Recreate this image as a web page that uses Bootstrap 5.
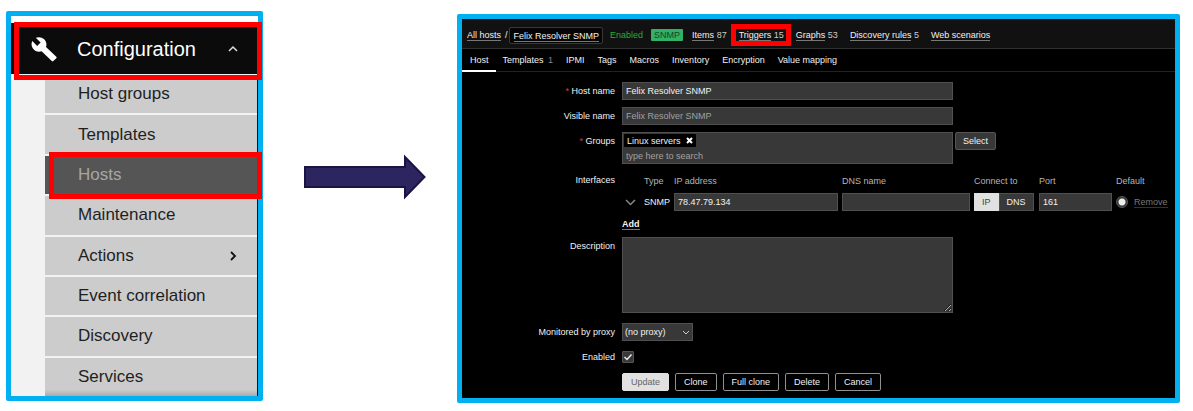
<!DOCTYPE html>
<html lang="en">
<head>
<meta charset="utf-8">
<meta name="viewport" content="width=device-width, initial-scale=1">
<title>Host configuration</title>
<link href="https://cdn.jsdelivr.net/npm/bootstrap@5.3.0/dist/css/bootstrap.min.css" rel="stylesheet">
<style>
  body { font-family: "Liberation Sans", Arial, sans-serif; background: #fff; }
  .guide { padding: 11px 13px 8px 6px; }
  .frame { border: 5px solid #00b0f0; border-radius: 2px; }
  .marker { position: absolute; border: 5px solid #f00; pointer-events: none; }

  /* side menu */
  .side-menu { flex: 0 0 257px; margin-bottom: 2px; padding-top: 7px; background: #f2f2f2 linear-gradient(#fff, #fff) top / 100% 7px no-repeat; }
  .menu-head { height: 51px; padding: 0 20px; color: #fff; background: #0b0b0b; border: 0; text-align: left; font-size: 20px; z-index: 2; }
  .menu-head .wrench { width: 26px; height: 26px; margin-right: 20px; }
  .menu-head .marker { inset: -1px -4px -6px 3px; }
  .menu-list { display: grid; grid-auto-rows: 1fr; row-gap: 2px; margin: 1px 0 0 34px; border-right: 1px solid #111; }
  .menu-list li { position: relative; display: flex; }
  .menu-list a { padding: 0 20px 0 33px; color: #1f1f1f; background: #ccc; font-size: 17px; line-height: 20px; text-decoration: none; }
  .menu-list .current { z-index: 1; }
  .menu-list .current a { color: #a6a6a6; background: #555; }
  .menu-list .current .marker { inset: -4px -5px -5px 4px; }
  .menu-list li:last-child a { background: linear-gradient(#ccc 84%, #aaa); }

  .arrow-cell { flex: 0 0 194px; padding-left: 41px; padding-top: 143px; }

  /* host form */
  .host-panel { margin-top: 3px; background: #000; color: #f2f2f2; font-size: 9px; line-height: 12px; min-width: 0; }
  .host-panel a { color: #f2f2f2; text-decoration: none; }
  .top-bar { height: 30px; padding: 3px 5px 0; background: #111; border-bottom: 1px solid #303030; }
  .host-panel .lined { border-bottom: 1px solid #777; line-height: 10px; display: inline-block; }
  .top-bar .slash { margin: 0 1px 0 4px; }
  .top-bar .crumb { border: 1px solid #383838; background: #050505; padding: 2px 3px 1px 4px; border-radius: 2px; }
  .host-panel .state { color: #1fb335; margin-left: 7px; }
  .snmp-tag { background: #34af67; color: #0d4a24; padding: 0 3px; margin: 0 9px 0 8px; border-radius: 1px; }
  .top-links { gap: 12px; color: #ccc; }
  .top-links .marker { inset: -5px -7px -5px -8px; }
  .tab-row { height: 23px; border-bottom: 1px solid #222; gap: 1px; }
  .tab-row a { display: block; height: 23px; line-height: 23px; padding: 0 6px; }
  .tab-row a.on { border-bottom: 2px solid #fff; padding: 0 7px 0 8px; }
  .tab-row small { color: #8a8a8a; font-size: 9px; margin-left: 2px; }

  .host-form { padding: 10px 5px 7px 0; display: grid; row-gap: 7px; }
  .line { display: grid; grid-template-columns: 153px minmax(0, 1fr); column-gap: 7px; }
  .line > :first-child { text-align: right; line-height: 18px; }
  .req { color: #e33; }
  .wide { width: 331px; }
  .fld { height: 18px; padding: 0 3px; background: #383838; border: 1px solid #505050; border-radius: 0; color: #f2f2f2; font-size: 9px; line-height: 12px; }
  .fld::placeholder, .picker input::placeholder { color: #a0a0a0; opacity: 1; }
  .fld:focus { background: #383838; color: #fff; }
  .picker { height: 32px; padding: 1px; margin-right: 2px; }
  .picker input { display: block; width: 100%; border: 0; background: none; font-size: 9px; line-height: 12px; padding: 3px 2px 2px; color: #f2f2f2; }
  .chip { background: #000; height: 13px; padding: 0 3px; width: max-content; display: flex; align-items: center; gap: 5px; border-radius: 1px; }
  .chip button { border: 0; background: none; padding: 0; display: flex; }
  .act { height: 18px; padding: 0 8px; font-size: 9px; line-height: 14px; border: 1px solid #909090; border-radius: 2px; color: #f2f2f2; background: #000; }
  .act.soft { background: #383838; border-color: #555; padding: 0 7px; }
  .act.main { background: #e1e1e1; border-color: #e1e1e1; color: #666; }
  .act-row { gap: 6px; }
  .add-row { margin-top: 8px; }
  .if-table { width: 548px; table-layout: fixed; border-collapse: collapse; }
  .c-exp { width: 22px; } .c-type { width: 30px; } .c-ip { width: 168px; } .c-dns { width: 132px; }
  .c-via { width: 65px; } .c-port { width: 77px; } .c-def { width: 54px; }
  .if-table th { height: 22px; padding: 0 0 3px; font-weight: 400; color: #b5b5b5; }
  .if-table td { padding: 0; height: 18px; vertical-align: middle; }
  .if-table button.bare { border: 0; background: none; padding: 0 0 0 3px; display: flex; }
  .switch-pair label { height: 18px; line-height: 16px; padding: 0 7px; background: #383838; border: 1px solid #505050; }
  .switch-pair input:checked + label { background: #e1e1e1; border-color: #e1e1e1; color: #444; }
  .dot { appearance: none; width: 12px; height: 12px; margin: 0; border-radius: 50%; border: 1px solid #555; background: radial-gradient(circle, #eee 3px, #383838 4px); }
  .tick { appearance: none; width: 12px; height: 12px; margin: 3px 0; border: 1px solid #555; border-radius: 1px; background: #383838 url("data:image/svg+xml,%3Csvg xmlns='http://www.w3.org/2000/svg' viewBox='0 0 10 10'%3E%3Cpath d='M1.5 5l2.5 2.5 4.500-5' fill='none' stroke='%23eee' stroke-width='1.400'/%3E%3C/svg%3E"); }
  .host-panel .off { color: #777; border-color: #333; margin-left: 6px; }
  .host-panel .proxy { appearance: none; width: 71px; padding: 0 2px; background: #383838 url("data:image/svg+xml,%3Csvg xmlns='http://www.w3.org/2000/svg' viewBox='0 0 8 5'%3E%3Cpath d='M1 1l3 3 3-3' fill='none' stroke='%23ccc'/%3E%3C/svg%3E") right 2px center / 8px 5px no-repeat; }
  .notes { height: 76px; margin-bottom: 3px; resize: both; }
</style>
</head>
<body>
<main class="guide d-flex align-items-stretch">
  <nav class="side-menu frame d-flex flex-column" aria-label="Configuration">
    <button type="button" class="menu-head position-relative d-flex align-items-center w-100">
      <svg class="wrench" viewBox="0 0 26 26" aria-hidden="true"><path fill="#fff" d="M25.300 20.800 15 11.100C16 8.500 15.400 5.500 13.200 3.300 10.900 1.100 7.500.600 4.800 1.800l4.800 4.800-3.400 3.300-4.900-4.800C-.1 7.900.5 11.300 2.800 13.500c2.200 2.200 5.200 2.700 7.800 1.700l10.200 9.900c.4.400 1.100.400 1.500 0l3-2.800c.4-.4.400-1.100 0-1.500z"/></svg>
      <span class="flex-grow-1">Configuration</span>
      <svg width="10" height="7" viewBox="0 0 10 7" aria-hidden="true"><path d="M1 6l4-4 4 4" fill="none" stroke="#ddd" stroke-width="1.500"/></svg>
      <span class="marker"></span>
    </button>
    <ul class="menu-list list-unstyled flex-grow-1">
      <li><a class="flex-fill d-flex align-items-center" href="#">Host groups</a></li>
      <li><a class="flex-fill d-flex align-items-center" href="#">Templates</a></li>
      <li class="current"><a class="flex-fill d-flex align-items-center" href="#">Hosts</a><span class="marker"></span></li>
      <li><a class="flex-fill d-flex align-items-center" href="#">Maintenance</a></li>
      <li><a class="flex-fill d-flex align-items-center justify-content-between" href="#">Actions
        <svg width="7" height="10" viewBox="0 0 7 10" aria-hidden="true"><path d="M1 1l4 4-4 4" fill="none" stroke="#111" stroke-width="1.800"/></svg></a></li>
      <li><a class="flex-fill d-flex align-items-center" href="#">Event correlation</a></li>
      <li><a class="flex-fill d-flex align-items-center" href="#">Discovery</a></li>
      <li><a class="flex-fill d-flex align-items-center" href="#">Services</a></li>
    </ul>
  </nav>

  <div class="arrow-cell">
    <svg class="d-block" width="122" height="46" viewBox="0 0 122 46" aria-hidden="true"><path d="M1 13H101V3L120.500 23 101 43V33H1z" fill="#2c2560" stroke="#1b1443" stroke-width="2"/></svg>
  </div>

  <section class="host-panel frame flex-grow-1">
    <header class="top-bar d-flex align-items-center text-nowrap">
      <a class="lined" href="#">All hosts</a><span class="slash">/</span>
      <span class="crumb"><a class="lined" href="#">Felix Resolver SNMP</a></span>
      <span class="state">Enabled</span>
      <span class="snmp-tag">SNMP</span>
      <div class="top-links d-flex">
        <span><a class="lined" href="#">Items</a> 87</span>
        <span class="position-relative"><span class="marker"></span><a class="lined" href="#">Triggers</a> 15</span>
        <span><a class="lined" href="#">Graphs</a> 53</span>
        <span><a class="lined" href="#">Discovery rules</a> 5</span>
        <span><a class="lined" href="#">Web scenarios</a></span>
      </div>
    </header>
    <nav class="tab-row d-flex text-nowrap" aria-label="Host sections">
      <a class="on" href="#">Host</a><a href="#">Templates <small>1</small></a><a href="#">IPMI</a><a href="#">Tags</a><a href="#">Macros</a><a href="#">Inventory</a><a href="#">Encryption</a><a href="#">Value mapping</a>
    </nav>
    <form class="host-form">
      <div class="line"><label for="host"><span class="req">*</span> Host name</label><input id="host" class="fld wide" value="Felix Resolver SNMP"></div>
      <div class="line"><label for="visible">Visible name</label><input id="visible" class="fld wide" placeholder="Felix Resolver SNMP"></div>
      <div class="line"><label for="groups"><span class="req">*</span> Groups</label>
        <div class="d-flex align-items-start">
          <div class="fld picker wide">
            <div class="chip">Linux servers <button type="button" aria-label="Remove Linux servers"><svg width="7" height="7" viewBox="0 0 7 7"><path d="M1 1l5 5M6 1L1 6" stroke="#fff" stroke-width="2"/></svg></button></div>
            <input id="groups" placeholder="type here to search">
          </div>
          <button type="button" class="act soft">Select</button>
        </div>
      </div>
      <div class="line"><span>Interfaces</span>
        <div>
          <table class="if-table">
            <colgroup><col class="c-exp"><col class="c-type"><col class="c-ip"><col class="c-dns"><col class="c-via"><col class="c-port"><col class="c-def"></colgroup>
            <thead><tr><th></th><th>Type</th><th>IP address</th><th>DNS name</th><th>Connect to</th><th>Port</th><th>Default</th></tr></thead>
            <tbody><tr>
              <td><button type="button" class="bare" aria-label="Expand"><svg width="11" height="7" viewBox="0 0 11 7"><path d="M1 1l4.500 4.500L10 1" fill="none" stroke="#888" stroke-width="1.500"/></svg></button></td>
              <td>SNMP</td>
              <td class="pe-1"><input class="fld d-block w-100" aria-label="IP address" value="78.47.79.134"></td>
              <td class="pe-1"><input class="fld d-block w-100" aria-label="DNS name"></td>
              <td><div class="switch-pair d-flex">
                <input class="btn-check" type="radio" name="via" id="viaIp" checked><label for="viaIp">IP</label>
                <input class="btn-check" type="radio" name="via" id="viaDns"><label for="viaDns">DNS</label></div></td>
              <td class="pe-1"><input class="fld d-block w-100" aria-label="Port" value="161"></td>
              <td><div class="d-flex align-items-center"><input type="radio" class="dot flex-shrink-0" name="default" aria-label="Default" checked><a class="lined off" href="#">Remove</a></div></td>
            </tr></tbody>
          </table>
          <div class="add-row d-flex"><a class="lined fw-bold" href="#">Add</a></div>
        </div>
      </div>
      <div class="line"><label for="notes">Description</label><textarea id="notes" class="fld wide notes"></textarea></div>
      <div class="line"><label for="proxy">Monitored by proxy</label><select id="proxy" class="fld proxy"><option>(no proxy)</option></select></div>
      <div class="line"><label for="enabled">Enabled</label><input id="enabled" type="checkbox" class="tick" checked></div>
      <div class="line"><span></span>
        <div class="act-row d-flex">
          <button type="button" class="act main">Update</button>
          <button type="button" class="act">Clone</button>
          <button type="button" class="act">Full clone</button>
          <button type="button" class="act">Delete</button>
          <button type="button" class="act">Cancel</button>
        </div>
      </div>
    </form>
  </section>
</main>
<script src="https://cdn.jsdelivr.net/npm/bootstrap@5.3.0/dist/js/bootstrap.bundle.min.js"></script>
</body>
</html>
